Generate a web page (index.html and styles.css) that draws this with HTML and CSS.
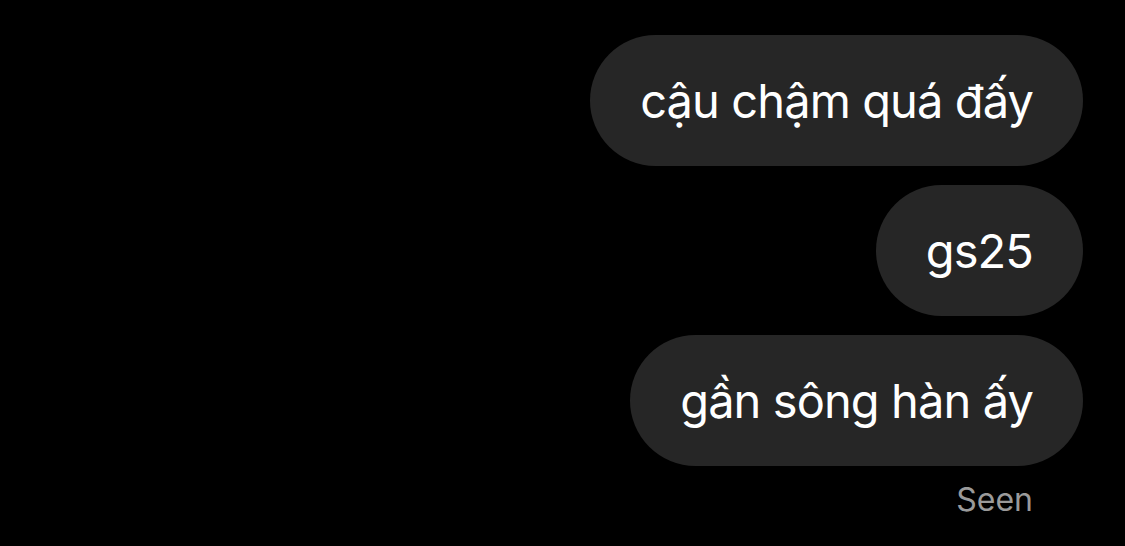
FILE: index.html
```html
<!DOCTYPE html>
<html lang="vi">
<head>
<meta charset="utf-8">
<link rel="stylesheet" href="styles.css">
</head>
<body>
<div class="thread">
  <div class="bubble">cậu chậm quá đấy</div>
  <div class="bubble">gs25</div>
  <div class="bubble">gần sông hàn ấy</div>
  <div class="seen">Seen</div>
</div>
</body>
</html>
```
FILE: styles.css
```css
html, body {
  margin: 0;
  padding: 0;
  background: #000;
  width: 1125px;
  height: 546px;
  overflow: hidden;
}
.thread {
  display: flex;
  flex-direction: column;
  align-items: flex-end;
  gap: 19px;
  padding: 35px 42px 0 0;
  font-family: Inter, "Noto Sans", sans-serif;
}
.bubble {
  background: #262626;
  color: #fff;
  font-size: 47px;
  letter-spacing: -0.9px;
  line-height: 59px;
  padding: 36px 50px;
  border-radius: 66px;
  white-space: nowrap;
}
.seen {
  color: #9a9a9a;
  font-size: 32px;
  line-height: 40px;
  margin-top: -5px;
  padding-right: 50px;
}
```
